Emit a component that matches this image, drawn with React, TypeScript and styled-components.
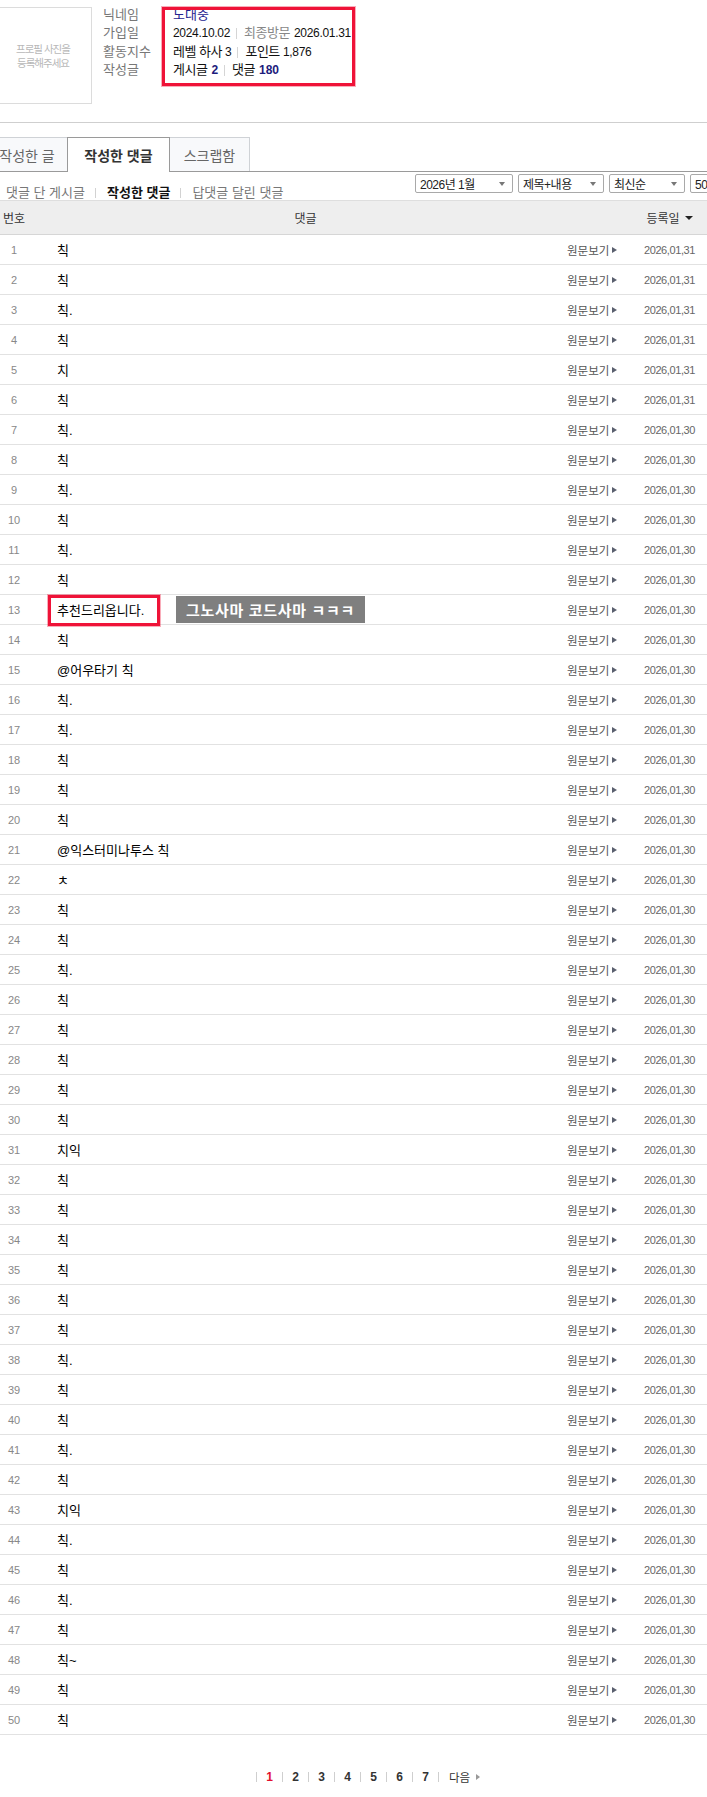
import React from 'react';
import styled, { createGlobalStyle } from 'styled-components';

const GlobalStyle = createGlobalStyle`
  html, body {
    margin: 0;
    padding: 0;
    background: #fff;
  }
  body {
    font-family: "Liberation Sans", "Noto Sans CJK KR", sans-serif;
    color: #111;
  }
`

const Page = styled.div`
  width: 707px;
  min-height: 1797px;
  overflow: hidden;
`

const ProfileSection = styled.section`
  display: flex;
  align-items: flex-start;
  height: 123px;
  box-sizing: border-box;
  padding-top: 7px;
  border-bottom: 1px solid #cfcfcf;
`

const PhotoBox = styled.div`
  width: 98px;
  height: 97px;
  margin-left: -6px;
  box-sizing: border-box;
  border: 1px solid #dcdcdc;
  display: flex;
  align-items: center;
  justify-content: center;
  text-align: center;
  font-size: 10.5px;
  line-height: 14px;
  letter-spacing: -1px;
  color: #b8b8b8;
`

const InfoGrid = styled.dl`
  position: relative;
  margin: -1px 0 0 11px;
  display: grid;
  grid-template-columns: 70px auto;
  font-size: 13px;
  line-height: 18.4px;
  white-space: nowrap;
`

const Label = styled.dt`
  margin: 0;
  color: #777;
`

const Value = styled.dd`
  margin: 0;
  color: #111;
  letter-spacing: -0.5px;
  display: flex;
  align-items: center;
`

const Digits = styled.span`
  font-size: 12px;
  letter-spacing: -0.3px;
`

const Nick = styled.span`
  color: #23238f;
  letter-spacing: 0;
`

const Muted = styled.span`
  color: #888;
  margin-right: 4px;
`

const Count = styled.b`
  color: #1c1c7c;
  margin-left: 4px;
  font-size: 12px;
  letter-spacing: 0;
`

const Divider = styled.span`
  display: inline-block;
  width: 1px;
  height: 11px;
  background: #d5d5d5;
  margin: 0 7px 0 6px;
`

const Highlight = styled.div<{ $left: number; $top: number; $w: number; $h: number }>`
  position: absolute;
  left: ${p => p.$left}px;
  top: ${p => p.$top}px;
  width: ${p => p.$w}px;
  height: ${p => p.$h}px;
  box-sizing: border-box;
  border: 3px solid #ef1338;
  box-shadow: 0 0 0 1px rgba(239, 19, 56, 0.35);
  pointer-events: none;
`

const TabBar = styled.nav`
  display: flex;
  align-items: flex-start;
  margin-top: 14px;
  height: 35px;
  box-sizing: border-box;
  border-bottom: 1px solid #9a9a9a;
`

const Tab = styled.div<{ $active?: boolean; $w: number; $first?: boolean }>`
  position: relative;
  z-index: ${p => (p.$active ? 1 : 0)};
  width: ${p => p.$w}px;
  height: ${p => (p.$active ? 35 : 34)}px;
  box-sizing: border-box;
  margin-left: ${p => (p.$first ? -14 : -1)}px;
  border: 1px solid ${p => (p.$active ? '#9a9a9a' : '#cfd2d6')};
  border-bottom: none;
  background: ${p => (p.$active ? '#fff' : '#f8f9fb')};
  display: flex;
  align-items: center;
  justify-content: center;
  font-size: 14px;
  font-weight: ${p => (p.$active ? 700 : 400)};
  color: ${p => (p.$active ? '#333' : '#666')};
  padding-bottom: ${p => (p.$active ? 1 : 0)}px;
  white-space: nowrap;
`

const Toolbar = styled.div`
  display: flex;
  height: 28px;
`

const SubNav = styled.div`
  flex: 1;
  display: flex;
  align-items: center;
  align-self: flex-start;
  padding: 13px 0 0 6px;
  font-size: 13px;
  line-height: 16px;
  color: #777;
  white-space: nowrap;
`

const NavItem = styled.span<{ $active?: boolean }>`
  color: ${p => (p.$active ? '#111' : '#777')};
  font-weight: ${p => (p.$active ? 700 : 400)};
`

const NavSep = styled.span`
  display: inline-block;
  width: 1px;
  height: 10px;
  background: #d2d2d2;
  margin: 0 11px 0 10px;
`

const SelectGroup = styled.div`
  flex-shrink: 0;
  display: flex;
  gap: 5px;
  margin-top: 2px;
  margin-right: -33px;
  align-self: flex-start;
`

const SelectBox = styled.div<{ $w: number }>`
  width: ${p => p.$w}px;
  height: 19px;
  box-sizing: border-box;
  border: 1px solid #a9a9a9;
  border-radius: 2px;
  padding: 0 7px 0 4px;
  display: flex;
  align-items: center;
  justify-content: space-between;
  font-size: 12px;
  letter-spacing: -0.5px;
  color: #222;
  white-space: nowrap;
`

const Caret = styled.span<{ $color?: string; $size?: number }>`
  display: inline-block;
  width: 0;
  height: 0;
  border-left: ${p => p.$size ?? 3.5}px solid transparent;
  border-right: ${p => p.$size ?? 3.5}px solid transparent;
  border-top: ${p => (p.$size ?? 3.5) + 0.5}px solid ${p => p.$color ?? '#777'};
`

const HeaderRow = styled.div`
  display: grid;
  grid-template-columns: 28px 1fr 77px 75px;
  align-items: center;
  height: 35px;
  box-sizing: border-box;
  border-top: 1px solid #dedede;
  border-bottom: 1px solid #d6d6d6;
  background: #eeeeee;
  font-size: 12px;
  color: #333;
`

const HeadCell = styled.div<{ $pad?: number }>`
  text-align: center;
  padding-left: ${p => p.$pad ?? 0}px;
  display: flex;
  align-items: center;
  justify-content: center;
  gap: 5px;
  white-space: nowrap;
`

const Row = styled.div`
  position: relative;
  display: grid;
  grid-template-columns: 28px 1fr 77px 75px;
  align-items: center;
  height: 30px;
  box-sizing: border-box;
  border-bottom: 1px solid #e2e2e2;
`

const NumCell = styled.div`
  text-align: center;
  font-size: 11px;
  color: #888;
`

const TextCell = styled.div`
  padding-left: 29px;
  font-size: 13px;
  color: #000;
  white-space: nowrap;
`

const LinkCell = styled.div`
  padding-left: 12px;
  display: flex;
  align-items: center;
  font-size: 11.5px;
  color: #555;
  white-space: nowrap;
`

const LinkArrow = styled.span`
  display: inline-block;
  width: 0;
  height: 0;
  margin-left: 3px;
  border-top: 3px solid transparent;
  border-bottom: 3px solid transparent;
  border-left: 5px solid #5a5f6e;
`

const DateCell = styled.div`
  text-align: center;
  font-size: 11px;
  letter-spacing: -0.4px;
  color: #666;
`

const Tag = styled.div`
  position: absolute;
  left: 176px;
  top: 1px;
  width: 189px;
  height: 27px;
  background: #7f7f7f;
  color: #fff;
  font-size: 15px;
  font-weight: 700;
  letter-spacing: 0.7px;
  display: flex;
  align-items: center;
  justify-content: center;
  white-space: nowrap;
`

const Pager = styled.div`
  display: flex;
  align-items: center;
  height: 16px;
  padding: 34px 0 0 256px;
  font-size: 12px;
`

const PageSep = styled.span`
  display: inline-block;
  width: 1px;
  height: 10px;
  background: #cfcfcf;
`

const PageNum = styled.span<{ $current?: boolean }>`
  width: 25px;
  text-align: center;
  font-weight: 700;
  color: ${p => (p.$current ? '#e3102e' : '#333')};
`

const NextLink = styled.span`
  display: flex;
  align-items: center;
  margin-left: 10px;
  color: #333;
  font-size: 11.5px;
`

const NextArrow = styled.span`
  display: inline-block;
  width: 0;
  height: 0;
  margin-left: 6px;
  border-top: 3px solid transparent;
  border-bottom: 3px solid transparent;
  border-left: 4px solid #999;
`

const comments = [
  '칙', '칙', '칙.', '칙', '치', '칙', '칙.', '칙', '칙.', '칙',
  '칙.', '칙', '추천드리옵니다.', '칙', '@어우타기 칙', '칙.', '칙.', '칙', '칙', '칙',
  '@익스터미나투스 칙', 'ㅊ', '칙', '칙', '칙.', '칙', '칙', '칙', '칙', '칙',
  '치익', '칙', '칙', '칙', '칙', '칙', '칙', '칙.', '칙', '칙',
  '칙.', '칙', '치익', '칙.', '칙', '칙.', '칙', '칙~', '칙', '칙',
]

export default function App() {
  return (
    <Page>
      <GlobalStyle />
      <ProfileSection>
        <PhotoBox>프로필 사진을<br />등록해주세요</PhotoBox>
        <InfoGrid>
          <Label>닉네임</Label>
          <Value><Nick>노대중</Nick></Value>
          <Label>가입일</Label>
          <Value>
            <Digits>2024.10.02</Digits>
            <Divider />
            <Muted>최종방문</Muted>
            <Digits>2026.01.31</Digits>
          </Value>
          <Label>활동지수</Label>
          <Value>레벨 하사&nbsp;<Digits>3</Digits><Divider />포인트&nbsp;<Digits>1,876</Digits></Value>
          <Label>작성글</Label>
          <Value>게시글<Count>2</Count><Divider />댓글<Count>180</Count></Value>
          <Highlight $left={59} $top={1} $w={193} $h={79} />
        </InfoGrid>
      </ProfileSection>

      <TabBar>
        <Tab $first $w={82}>작성한 글</Tab>
        <Tab $active $w={103}>작성한 댓글</Tab>
        <Tab $w={81}>스크랩함</Tab>
      </TabBar>

      <Toolbar>
        <SubNav>
          <NavItem>댓글 단 게시글</NavItem>
          <NavSep />
          <NavItem $active>작성한 댓글</NavItem>
          <NavSep />
          <NavItem>답댓글 달린 댓글</NavItem>
        </SubNav>
        <SelectGroup>
          <SelectBox $w={98}>2026년 1월<Caret /></SelectBox>
          <SelectBox $w={86}>제목+내용<Caret /></SelectBox>
          <SelectBox $w={76}>최신순<Caret /></SelectBox>
          <SelectBox $w={50}>50개<Caret /></SelectBox>
        </SelectGroup>
      </Toolbar>

      <HeaderRow>
        <HeadCell>번호</HeadCell>
        <HeadCell $pad={28}>댓글</HeadCell>
        <HeadCell />
        <HeadCell>등록일<Caret $color="#222" $size={4} /></HeadCell>
      </HeaderRow>

      {comments.map((text, i) => (
        <Row key={i}>
          <NumCell>{i + 1}</NumCell>
          <TextCell>{text}</TextCell>
          <LinkCell>원문보기<LinkArrow /></LinkCell>
          <DateCell>{i < 6 ? '2026,01,31' : '2026,01,30'}</DateCell>
          {i === 12 && (
            <>
              <Highlight $left={48} $top={0} $w={112} $h={31} />
              <Tag>그노사마 코드사마 ㅋㅋㅋ</Tag>
            </>
          )}
        </Row>
      ))}

      <Pager>
        {[1, 2, 3, 4, 5, 6, 7].map(n => (
          <React.Fragment key={n}>
            <PageSep />
            <PageNum $current={n === 1}>{n}</PageNum>
          </React.Fragment>
        ))}
        <PageSep />
        <NextLink>다음<NextArrow /></NextLink>
      </Pager>
    </Page>
  )
}
